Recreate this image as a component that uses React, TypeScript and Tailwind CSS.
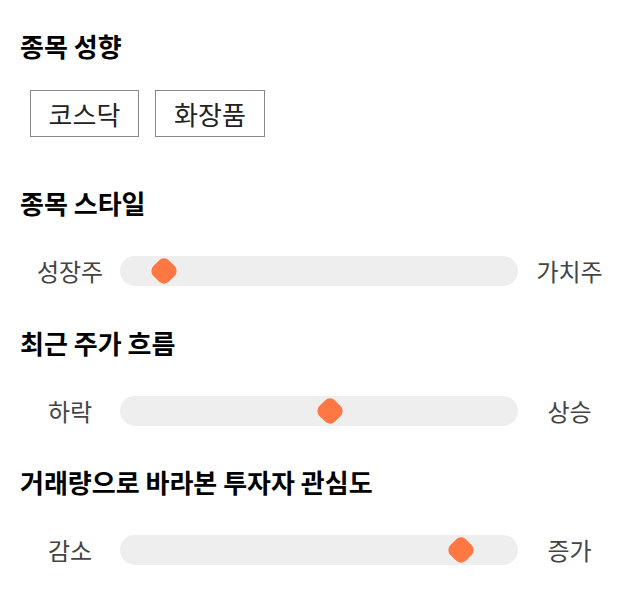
const font = { fontFamily: '"Noto Sans CJK KR", "Noto Sans", sans-serif' };

const Slider = ({ left, right, pos }: { left: string; right: string; pos: number }) => (
  <div className="flex items-center h-[30px]">
    <div className="w-[100px] text-center text-[24px] text-[#444]">{left}</div>
    <div className="relative w-[398px] h-[30px] rounded-full bg-[#eeeeee]">
      <div
        className="absolute top-1/2 w-[22px] h-[22px] -translate-x-1/2 -translate-y-1/2 rotate-45 rounded-[7px] bg-[#ff7843]"
        style={{ left: pos }}
      />
    </div>
    <div className="w-[103px] text-center text-[24px] text-[#444]">{right}</div>
  </div>
);

export default function App() {
  return (
    <div className="w-[640px] h-[606px] bg-white pl-[20px] pt-[30px]" style={font}>
      <h2 className="text-[26px] leading-[32px] font-bold text-black">종목 성향</h2>
      <div className="flex gap-[16px] mt-[28px] ml-[10px]">
        <div className="w-[109px] h-[47px] border border-[#888] flex items-center justify-center text-[26px] text-[#222]">
          코스닥
        </div>
        <div className="w-[110px] h-[47px] border border-[#888] flex items-center justify-center text-[26px] text-[#222]">
          화장품
        </div>
      </div>

      <h2 className="mt-[50px] text-[26px] leading-[32px] font-bold text-black">종목 스타일</h2>
      <div className="mt-[37px]">
        <Slider left="성장주" right="가치주" pos={44} />
      </div>

      <h2 className="mt-[41px] text-[26px] leading-[32px] font-bold text-black">최근 주가 흐름</h2>
      <div className="mt-[37px]">
        <Slider left="하락" right="상승" pos={210} />
      </div>

      <h2 className="mt-[40px] text-[26px] leading-[32px] font-bold text-black">
        거래량으로 바라본 투자자 관심도
      </h2>
      <div className="mt-[37px]">
        <Slider left="감소" right="증가" pos={341} />
      </div>
    </div>
  );
}
